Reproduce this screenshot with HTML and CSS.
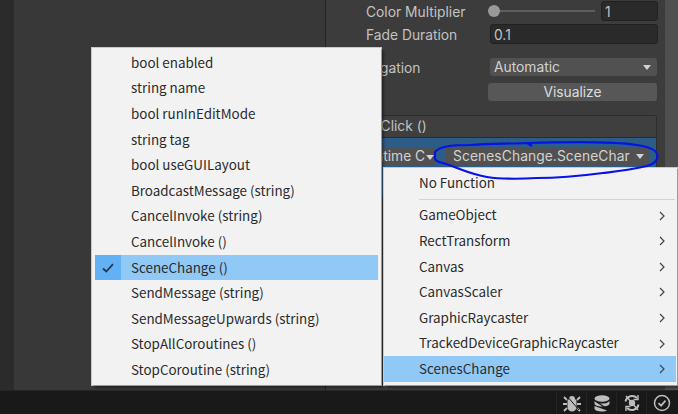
FILE: index.html
```
<!DOCTYPE html>
<html lang="en">
<head>
<meta charset="utf-8">
<title>Unity Inspector</title>
<link rel="stylesheet" href="styles.css">
</head>
<body>
<div class="app">
  <div class="main">
    <div class="gutter"></div>
    <div class="scene"></div>
    <section class="inspector">
      <div class="row row-first">
        <span class="label">Color Multiplier</span>
        <div class="slider"><span class="track"></span><span class="knob"></span></div>
        <div class="field field-num">1</div>
      </div>
      <div class="row row-fade">
        <span class="label">Fade Duration</span>
        <div class="field field-wide">0.1</div>
      </div>
      <div class="row row-nav">
        <span class="label label-nav">Navigation</span>
        <div class="drop drop-wide">Automatic<i class="caret"></i></div>
      </div>
      <div class="row row-vis">
        <div class="btn">Visualize</div>
      </div>
      <div class="event">
        <div class="event-head">On Click ()</div>
        <div class="event-body">
          <div class="drop drop-runtime">Runtime C<i class="caret caret-small"></i></div>
          <div class="drop drop-func">ScenesChange.SceneChar<i class="caret"></i></div>
        </div>
      </div>
    </section>
    <div class="scroll"></div>
  </div>
  <footer class="status">
    <span class="cell"><svg viewBox="0 0 18 18" width="18" height="18"><path d="M6 5a3 3 0 0 1 6 0l1.500 1.500v6.500a4.500 4.500 0 0 1-9 0V6.500z" fill="#bdbdbd"/><path d="M1 3l3 3M17 3l-3 3M0 10h4M18 10h-4M1 17l3-3M17 17l-3-3" stroke="#bdbdbd" stroke-width="1.800" fill="none"/><path d="M3 1l13 15" stroke="#191919" stroke-width="1"/></svg></span>
    <span class="cell"><svg viewBox="0 0 18 18" width="18" height="18"><ellipse cx="9" cy="4.500" rx="7.500" ry="3.200" fill="#bdbdbd"/><path d="M1.500 7v2.500c0 1.700 3.300 3 7.500 3s7.500-1.300 7.500-3V7c-1 1.700-4 2.600-7.500 2.600S2.500 8.700 1.500 7zM1.500 12v2.500c0 1.700 3.300 3 7.500 3 2 0 3.800-.4 5-1L1.500 12z" fill="#bdbdbd"/><path d="M4 8l13 9" stroke="#191919" stroke-width="1.200"/></svg></span>
    <span class="cell"><svg viewBox="0 0 18 18" width="18" height="18"><path d="M2.500 7.500a6.800 6.800 0 0 1 11.500-3.500M15.500 10.500a6.800 6.800 0 0 1-11.500 3.500" stroke="#bdbdbd" stroke-width="2" fill="none"/><path d="M15 1v4.500h-4.500M3 17v-4.500h4.500" stroke="#bdbdbd" stroke-width="1.400" fill="none"/><circle cx="9" cy="9" r="3.200" fill="#bdbdbd"/><path d="M3 2l12 14" stroke="#bdbdbd" stroke-width="1.500"/></svg></span>
    <span class="cell"><svg viewBox="0 0 18 18" width="18" height="18"><circle cx="9" cy="9" r="7.500" stroke="#bdbdbd" stroke-width="1.500" fill="none"/><path d="M5.500 9.200l2.600 2.500 4.400-5" stroke="#bdbdbd" stroke-width="1.800" fill="none"/></svg></span>
  </footer>
</div>

<svg class="scribble" viewBox="430 135 235 48" width="235" height="48">
  <path d="M435 152C440 146 452 145 470 145C490 143 505 144 527 143L532 146L528 143C560 142 610 141 637 145C650 147 656 150 657 154C659 160 654 164 647 166C630 170 620 171 603 173C580 176 560 178 537 178C520 179 500 179 487 177C475 175 465 171 457 168C450 165 446 164 443 163C437 162 434 160 435 156Z" fill="none" stroke="#0612e6" stroke-width="2.200"/>
</svg>

<ul class="menu menu-left">
  <li class="item">bool enabled</li>
  <li class="item">string name</li>
  <li class="item">bool runInEditMode</li>
  <li class="item">string tag</li>
  <li class="item">bool useGUILayout</li>
  <li class="item">BroadcastMessage (string)</li>
  <li class="item">CancelInvoke (string)</li>
  <li class="item">CancelInvoke ()</li>
  <li class="item item-on"><span class="tick"><svg viewBox="0 0 12 10" width="12" height="10"><path d="M1 5.500l3.300 3L11 1.200" fill="none" stroke="#26384a" stroke-width="1.800"/></svg></span>SceneChange ()</li>
  <li class="item">SendMessage (string)</li>
  <li class="item">SendMessageUpwards (string)</li>
  <li class="item">StopAllCoroutines ()</li>
  <li class="item">StopCoroutine (string)</li>
</ul>

<ul class="menu menu-right">
  <li class="item">No Function</li>
  <li class="sep"></li>
  <li class="item">GameObject<svg class="chev" viewBox="0 0 6 10" width="6" height="10"><path d="M1 1l4 4-4 4" fill="none" stroke="#444" stroke-width="1.200"/></svg></li>
  <li class="item">RectTransform<svg class="chev" viewBox="0 0 6 10" width="6" height="10"><path d="M1 1l4 4-4 4" fill="none" stroke="#444" stroke-width="1.200"/></svg></li>
  <li class="item">Canvas<svg class="chev" viewBox="0 0 6 10" width="6" height="10"><path d="M1 1l4 4-4 4" fill="none" stroke="#444" stroke-width="1.200"/></svg></li>
  <li class="item">CanvasScaler<svg class="chev" viewBox="0 0 6 10" width="6" height="10"><path d="M1 1l4 4-4 4" fill="none" stroke="#444" stroke-width="1.200"/></svg></li>
  <li class="item">GraphicRaycaster<svg class="chev" viewBox="0 0 6 10" width="6" height="10"><path d="M1 1l4 4-4 4" fill="none" stroke="#444" stroke-width="1.200"/></svg></li>
  <li class="item">TrackedDeviceGraphicRaycaster<svg class="chev" viewBox="0 0 6 10" width="6" height="10"><path d="M1 1l4 4-4 4" fill="none" stroke="#444" stroke-width="1.200"/></svg></li>
  <li class="item item-sel">ScenesChange<svg class="chev" viewBox="0 0 6 10" width="6" height="10"><path d="M1 1l4 4-4 4" fill="none" stroke="#444" stroke-width="1.200"/></svg></li>
</ul>
</body>
</html>
```
FILE: styles.css
```
* { box-sizing: border-box; }
html, body { margin: 0; height: 100%; }
body {
  position: relative;
  width: 678px;
  height: 414px;
  overflow: hidden;
  font-family: "Noto Sans CJK KR", "Noto Sans", sans-serif;
  font-size: 13.4px;
  background: #191919;
}
.app { display: flex; flex-direction: column; height: 414px; }
.main { display: flex; height: 390px; background: #383838; }
.gutter { width: 14px; background: #2b2b2b; }
.scene { width: 312px; background: #383838; border-right: 1px solid #222; }
.inspector { width: 339px; padding-left: 40px; padding-right: 7px; color: #c2c2c2; background: #3c3c3c; font-family: Inter, sans-serif; font-size: 13.8px; }
.scroll { width: 13px; background: #505050; }
.row { display: flex; align-items: center; }
.label { width: 124px; flex: none; white-space: nowrap; line-height: 20px; padding-top: 2px; }
.label-nav { margin-left: -15px; width: 139px; }
.row-first { height: 20px; margin-top: 1px; }
.row-fade { height: 20px; margin-top: 3px; }
.row-nav { height: 18px; margin-top: 14px; }
.row-vis { height: 18px; margin-top: 7px; padding-left: 122px; }
.slider { position: relative; width: 105px; height: 12px; margin-right: 6px; }
.track { position: absolute; left: 0; right: 0; top: 5px; height: 2px; background: #5e5e5e; }
.knob { position: absolute; left: -2px; top: 0; width: 12px; height: 12px; border-radius: 50%; background: #999; }
.field { height: 20px; border: 1px solid #212121; border-radius: 3px; background: #2a2a2a; padding-left: 3px; line-height: 20px; }
.field-num { width: 57px; }
.field-wide { width: 168px; }
.drop { position: relative; height: 18px; line-height: 19px; border-radius: 3px; background: #515151; color: #d2d2d2; padding-left: 4px; white-space: nowrap; overflow: hidden; }
.drop-wide { width: 167px; }
.caret { position: absolute; right: 6px; top: 7px; width: 0; height: 0; border-left: 4px solid transparent; border-right: 4px solid transparent; border-top: 5px solid #d2d2d2; }
.caret-small { right: 1px; top: 8px; }
.btn { width: 169px; height: 18px; line-height: 19px; text-align: center; border-radius: 3px; background: #575757; color: #dcdcdc; }
.event { margin-top: 14px; width: 300px; margin-left: -9px; border: 1px solid #2c2c2c; border-radius: 3px; background: #414141; }
.event-head { height: 21px; padding-left: 0; line-height: 21px; background: #3f3f3f; white-space: nowrap; }
.event-body { display: flex; gap: 11px; height: 60px; padding: 9px 6px 0 0; background: #2c5d87; border-top: 1px solid #2a2a2a; justify-content: flex-end; }
.drop-runtime { width: 70px; height: 19px; padding-left: 0; text-indent: -7px; background: #515151; }
.drop-func { width: 204px; height: 19px; padding-left: 7px; letter-spacing: .08px; }
.drop-func, .drop-runtime { line-height: 18px; }
.status { display: flex; align-items: center; justify-content: flex-end; height: 24px; padding-right: 2px; background: #191919; border-top: 1px solid #262626; }
.cell { display: flex; align-items: center; justify-content: center; width: 30px; height: 23px; border-left: 1px solid #242424; }
.menu {
  position: absolute;
  margin: 0;
  padding: 3px;
  list-style: none;
  background: #f2f2f2;
  color: #2b2b2b;
  box-shadow: 1px 1px 0 #9a9a9a, 0 0 0 1px #c9c9c9, 3px 3px 2px rgba(0,0,0,.35);
}
.menu-left { left: 92px; top: 48px; width: 289px; height: 337px; padding-top: 2px; }
.menu-right { left: 384px; top: 168px; width: 293px; height: 217px; padding: 2px 1px 2px 0; }
.item { position: relative; display: flex; align-items: center; height: 25.6px; padding-bottom: 2px; white-space: nowrap; }
.menu-left .item { padding-left: 36px; }
.menu-right .item { padding-left: 35px; }
.item-on { background: #90c8f6; }
.tick { position: absolute; left: 0; top: 0; bottom: 0; width: 26px; display: flex; align-items: center; justify-content: center; background: #63b1f5; }
.item-sel { background: #90c8f6; }
.sep { height: 1px; margin: 3px 1px 3px 35px; background: #d4d4d4; }
.chev { position: absolute; right: 11px; top: 8px; }
.scribble { position: absolute; left: 430px; top: 135px; z-index: 2; pointer-events: none; }
```
